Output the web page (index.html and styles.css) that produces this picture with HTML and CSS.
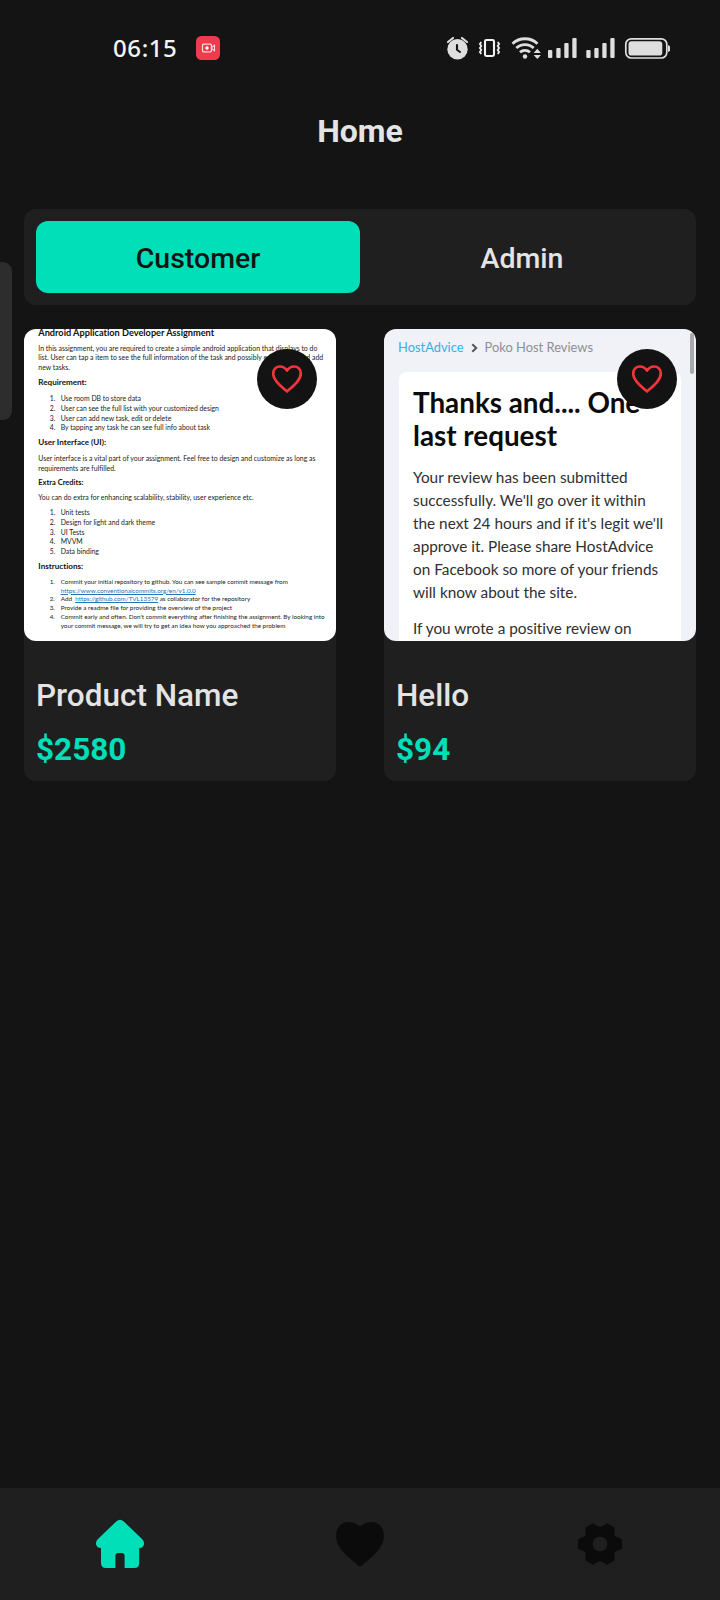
FILE: index.html
```html
<!DOCTYPE html>
<html lang="en">
<head>
<meta charset="utf-8">
<title>Home</title>
<link rel="stylesheet" href="styles.css">
</head>
<body>
<div class="screen">
  <div class="status">
    <span class="time">06:15</span>
    <svg class="rec" width="24" height="24" viewBox="0 0 24 24"><rect width="24" height="24" rx="5.5" fill="#ee3b4e"/><rect x="6.5" y="8.2" width="9" height="7.6" rx="1" fill="none" stroke="#fbdcdc" stroke-width="1.2"/><circle cx="11" cy="12" r="1.7" fill="#fff"/><path d="M15.8 11.2l2.7-1.8v5.2l-2.7-1.8" fill="none" stroke="#fbdcdc" stroke-width="1.1"/></svg>
    <svg class="sys" width="230" height="30" viewBox="440 33 230 30">
      <g fill="#dedede">
        <circle cx="457.5" cy="49.3" r="10.2"/>
        <path d="M448 42l5-4M467 42l-5-4" stroke="#dedede" stroke-width="2.2" stroke-linecap="round"/>
        <path d="M457 45v4.8l3 2.2" fill="none" stroke="#141414" stroke-width="2.1" stroke-linecap="round"/>
        <rect x="485" y="40" width="9" height="16" rx="1.4" fill="none" stroke="#f2f2f2" stroke-width="2.1"/>
        <path d="M481.3 42l-1.4 2 1.4 2-1.4 2 1.4 2-1.4 2 1.4 2M497.7 42l1.4 2-1.4 2 1.4 2-1.4 2 1.4 2-1.4 2" fill="none" stroke="#eee" stroke-width="1.8"/>
        <g fill="none" stroke="#dedede" stroke-width="2.8"><path d="M512.5 43.8a18 18 0 0 1 25 0"/><path d="M516.3 48.1a12.5 12.5 0 0 1 17.4 0"/><path d="M520 52.3a7.3 7.3 0 0 1 10 0"/></g>
        <circle cx="525" cy="56.5" r="2.2"/>
        <path d="M537.3 48.8l3.6 4.2h-7.2zM537.3 59l3.6-4h-7.2z"/>
        <rect x="548" y="50" width="4.3" height="8" rx="1"/><rect x="556.3" y="48" width="4.3" height="10" rx="1"/><rect x="564.3" y="43" width="4.3" height="15" rx="1"/><rect x="572.3" y="38" width="4.3" height="20" rx="1"/>
        <rect x="586.3" y="50" width="4.3" height="8" rx="1"/><rect x="594.3" y="48" width="4.3" height="10" rx="1"/><rect x="602.3" y="43" width="4.3" height="15" rx="1"/><rect x="610.3" y="38" width="4.3" height="20" rx="1"/>
        <rect x="625.8" y="38.8" width="41" height="19.2" rx="5.5" fill="none" stroke="#dedede" stroke-width="1.7"/>
        <rect x="628.5" y="41.2" width="33.8" height="14.4" rx="3.2"/>
        <path d="M668 45.2q2 .3 2 1.5v3.6q0 1.3-2 1.6z"/>
      </g>
    </svg>
  </div>
  <h1 class="title">Home</h1>
  <div class="tabs">
    <div class="tab active">Customer</div>
    <div class="tab">Admin</div>
  </div>
  <div class="grid">
    <div class="card">
      <div class="thumb doc">
        <div class="doc-title">Android Application Developer Assignment</div>
        <p class="p1">In this assignment, you are required to create a simple android application that displays to do<br>list. User can tap a item to see the full information of the task and possibly edit, delete and add<br>new tasks.</p>
        <h2>Requirement:</h2>
        <ol class="reqs">
          <li><b>1.</b><span>Use room DB to store data</span></li>
          <li><b>2.</b><span>User can see the full list with your customized design</span></li>
          <li><b>3.</b><span>User can add new task, edit or delete</span></li>
          <li><b>4.</b><span>By tapping any task he can see full info about task</span></li>
        </ol>
        <h2>User Interface (UI):</h2>
        <p class="p2">User interface is a vital part of your assignment. Feel free to design and customize as long as<br>requirements are fulfilled.</p>
        <h2 class="small">Extra Credits:</h2>
        <p class="p3">You can do extra for enhancing scalability, stability, user experience etc.</p>
        <ol class="extras">
          <li><b>1.</b><span>Unit tests</span></li>
          <li><b>2.</b><span>Design for light and dark theme</span></li>
          <li><b>3.</b><span>UI Tests</span></li>
          <li><b>4.</b><span>MVVM</span></li>
          <li><b>5.</b><span>Data binding</span></li>
        </ol>
        <h2>Instructions:</h2>
        <ol class="steps">
          <li><b>1.</b><span>Commit your initial repository to github. You can see sample commit message from<br><u>https://www.conventionalcommits.org/en/v1.0.0</u></span></li>
          <li><b>2.</b><span>Add &nbsp;<u>https://github.com/TVL13579</u> as collaborator for the repository</span></li>
          <li><b>3.</b><span>Provide a readme file for providing the overview of the project</span></li>
          <li><b>4.</b><span>Commit early and often. Don't commit everything after finishing the assignment. By looking into<br>your commit message, we will try to get an idea how you approached the problem</span></li>
        </ol>
        <div class="fav"><svg width="34" height="34" viewBox="0 0 34 34"><path d="M17 29.4C10.500 23.800 3.200 18.200 3.200 11.300C3.200 7.200 6.200 4.500 9.800 4.500C12.900 4.500 15.300 5.900 17 8.600C18.700 5.900 21.100 4.500 24.200 4.500C27.800 4.500 30.800 7.200 30.800 11.300C30.800 18.200 23.500 23.800 17 29.400Z"/></svg></div>
      </div>
      <div class="name">Product Name</div>
      <div class="price">$2580</div>
    </div>
    <div class="card">
      <div class="thumb web">
        <div class="crumbs"><span class="link">HostAdvice</span><svg width="7" height="10" viewBox="0 0 7 10"><path d="M1.300 1.200L5.200 5L1.300 8.800" fill="none" stroke="#555" stroke-width="2"/></svg><span class="here">Poko Host Reviews</span></div>
        <div class="sheet">
          <div class="sheet-title">Thanks and.... One<br>last request</div>
          <p>Your review has been submitted<br>successfully. We'll go over it within<br>the next 24 hours and if it's legit we'll<br>approve it. Please share HostAdvice<br>on Facebook so more of your friends<br>will know about the site.</p>
          <p>If you wrote a positive review on</p>
        </div>
        <div class="scroll"></div>
        <div class="fav"><svg width="34" height="34" viewBox="0 0 34 34"><path d="M17 29.4C10.500 23.800 3.200 18.200 3.200 11.300C3.200 7.200 6.200 4.500 9.800 4.500C12.900 4.500 15.300 5.900 17 8.600C18.700 5.900 21.100 4.500 24.200 4.500C27.800 4.500 30.800 7.200 30.800 11.300C30.800 18.200 23.500 23.800 17 29.400Z"/></svg></div>
      </div>
      <div class="name">Hello</div>
      <div class="price">$94</div>
    </div>
  </div>
  <div class="nav">
    <svg width="60" height="60" viewBox="90 1514 60 60"><path fill="#00dfb7" d="M116.500 1521.200Q120 1518.200 123.500 1521.200L142.300 1539.200Q144.500 1541.500 144 1544.500Q143.200 1548 139.200 1548V1563Q139.200 1568 134.200 1568H124.600V1555.500Q124.600 1553 122.200 1553H117.800Q115.400 1553 115.400 1555.500V1568H106Q101 1568 101 1563V1548Q97 1548 96.100 1544.500Q95.500 1541.500 97.700 1539.200Z"/></svg>
    <svg width="60" height="60" viewBox="330 1514 60 60"><path fill="#0b0b0b" d="M360 1566.500C358.500 1566.500 356 1563.500 354 1562C344 1554 336 1545.500 336 1536C336 1527.500 341.500 1522 348.500 1522C353.500 1522 357.500 1524 360 1526.500C362.500 1524 366.500 1522 371.500 1522C378.500 1522 384 1527.500 384 1536C384 1545.500 376 1554 366 1562C364 1563.500 361.500 1566.500 360 1566.500Z"/></svg>
    <svg width="60" height="60" viewBox="570 1514 60 60"><path fill="#0b0b0b" fill-rule="evenodd" stroke="#0b0b0b" stroke-width="4" stroke-linejoin="round" d="M593 1525.500L597.500 1528.500H602.500L607 1525.500L612.500 1528.500V1536L615 1538.500L620 1540.500V1547.500L615 1549.500L612.500 1552V1559.500L607 1562.500L602.500 1559.500H597.500L593 1562.500L587.500 1559.500V1552L585 1549.500L580 1547.500V1540.500L585 1538.500L587.500 1536V1528.500ZM600 1534.700a9.300 9.300 0 1 0 .01 0Z"/></svg>
  </div>
  <div class="handle"></div>
</div>
</body>
</html>
```
FILE: styles.css
```css
* { box-sizing: border-box; margin: 0; padding: 0; }
body { background: #141414; font-family: Roboto, sans-serif; color: #e4e4e4; }
.screen { position: relative; width: 720px; height: 1600px; overflow: hidden; display: flex; flex-direction: column; }
svg { display: block; flex: none; }
.status { height: 96px; padding: 0 50px 0 113px; display: flex; align-items: center; }
.time { width: 83px; font: 500 24px/30px "Noto Sans", sans-serif; letter-spacing: 0.6px; color: #f4f4f4; }
.sys { margin-left: auto; }
.title { height: 70px; line-height: 70px; text-align: center; font-size: 32px; font-weight: 700; }
.tabs { margin: 43px 24px 0; height: 96px; padding: 12px; display: flex; background: #1f1f1f; border-radius: 12px; }
.tab { flex: 1; line-height: 76px; text-align: center; font-size: 28.5px; font-weight: 500; border-radius: 12px; }
.active { background: #00dfb7; color: #141414; }
.grid { margin: 24px 24px 0; display: grid; grid-template-columns: 312px 312px; justify-content: space-between; }
.card { height: 452px; background: #1f1f1f; border-radius: 12px; }
.thumb { position: relative; height: 312px; overflow: hidden; border-radius: 12px; white-space: nowrap; font-family: Lato, sans-serif; font-variant-ligatures: none; }
.name { padding-left: 12px; margin-top: 36px; font-size: 31.5px; line-height: 38px; font-weight: 500; }
.price { padding-left: 12px; margin-top: 16px; font-size: 31.5px; line-height: 38px; font-weight: 700; color: #00dfb7; }
.fav { position: absolute; right: 19px; top: 20px; width: 60px; height: 60px; border-radius: 50%; background: #131313; display: flex; align-items: center; justify-content: center; }
.fav path { fill: none; stroke: #f8343b; stroke-width: 2.7; stroke-linejoin: round; }
.doc { background: #fff; color: #222; padding-left: 14.3px; font-size: 6.92px; line-height: 9.65px; }
.doc-title { margin-top: -2px; font-size: 9.2px; line-height: 11px; font-weight: 700; color: #111; }
.doc h2 { font-size: 8.1px; line-height: 9.65px; font-weight: 700; color: #111; margin-top: 5.5px; }
.doc h2.small { font-size: 7.5px; margin-top: 4.8px; }
.doc ol { list-style: none; padding-left: 11.4px; }
.doc li { display: flex; }
.doc b { width: 11px; font-weight: 400; }
.doc u { color: #2474b8; }
.p1 { margin-top: 5.6px; }
.reqs { margin-top: 6.6px; font-size: 6.85px; }
.p2 { margin-top: 6px; }
.p3 { margin-top: 5.5px; }
.extras { margin-top: 5px; font-size: 6.85px; line-height: 9.75px; }
.steps { margin-top: 5.7px; font-size: 6.3px; line-height: 8.93px; }
.web { background: #f0f2f8; padding: 7px 15px 0 15px; }
.crumbs { height: 22px; margin-left: -1px; display: flex; align-items: center; font-size: 12.9px; }
.crumbs svg { margin: 2px 7px 0 7px; }
.link { color: #3aaeea; }
.here { color: #8d8f94; }
.sheet { margin-top: 14px; height: 300px; padding: 14px 0 0 14px; background: #fff; border-radius: 8px; color: #303030; font-size: 15.35px; line-height: 23.1px; }
.sheet-title { font-size: 27.8px; line-height: 33px; font-weight: 700; color: #0b0b0b; }
.sheet p { margin-top: 14px; }
.sheet p + p { margin-top: 12.5px; }
.scroll { position: absolute; right: 2px; top: 4px; width: 4px; height: 41px; border-radius: 2px; background: #a9a9ab; }
.nav { margin-top: auto; height: 112px; background: #1f1f1f; display: grid; grid-template-columns: repeat(3, 1fr); place-items: center; }
.handle { position: absolute; left: -12px; top: 262px; width: 23.5px; height: 158px; border-radius: 9px; background: #2d2d2d; }
```
